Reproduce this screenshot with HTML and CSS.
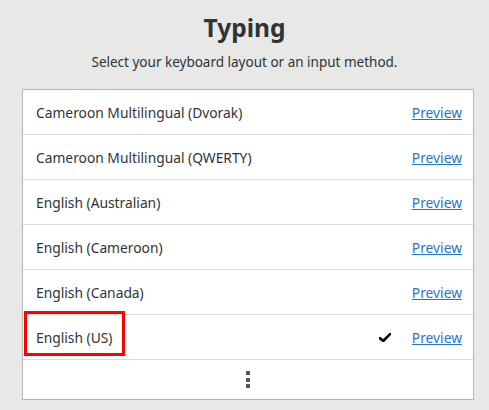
FILE: index.html
```html
<!DOCTYPE html>
<html>
<head>
<meta charset="utf-8">
<link rel="stylesheet" href="styles.css">
</head>
<body>
<div class="page">
  <h1 class="title">Typing</h1>
  <p class="subtitle">Select your keyboard layout or an input method.</p>
  <div class="list">
    <div class="row"><span class="name">Cameroon Multilingual (Dvorak)</span><a class="preview" href="#">Preview</a></div>
    <div class="row"><span class="name">Cameroon Multilingual (QWERTY)</span><a class="preview" href="#">Preview</a></div>
    <div class="row"><span class="name">English (Australian)</span><a class="preview" href="#">Preview</a></div>
    <div class="row"><span class="name">English (Cameroon)</span><a class="preview" href="#">Preview</a></div>
    <div class="row"><span class="name">English (Canada)</span><a class="preview" href="#">Preview</a></div>
    <div class="row selected"><span class="name">English (US)</span><svg class="check" width="12" height="9" viewBox="0 0 12 9"><path d="M1 5.2 L4.2 8 L11 1.2" fill="none" stroke="#000" stroke-width="2.6" stroke-linecap="round" stroke-linejoin="round"/></svg><a class="preview" href="#">Preview</a><span class="highlight"></span></div>
    <div class="more">
      <span class="dots"><i></i><i></i><i></i></span>
    </div>
  </div>
</div>
</body>
</html>
```

FILE: styles.css
```css
html, body {
  margin: 0;
  padding: 0;
  background: #e8e8e7;
}
body {
  font-family: "Noto Sans", "Open Sans", sans-serif;
  color: #2e3436;
}
.page {
  display: flex;
  flex-direction: column;
  align-items: center;
  padding-top: 11px;
}
.title {
  margin: 0;
  font-size: 24.5px;
  font-weight: bold;
  line-height: 34px;
}
.subtitle {
  margin: 7px 0 0 0;
  font-size: 13.5px;
  line-height: 20px;
}
.list {
  align-self: flex-start;
  margin: 17px 0 0 22px;
  width: 450px;
  background: #fff;
  border: 1px solid #b6b6b3;
  display: flex;
  flex-direction: column;
}
.row {
  position: relative;
  height: 44px;
  display: flex;
  align-items: center;
  padding: 0 11px 0 13px;
  border-bottom: 1px solid #dcdcda;
  font-size: 13.8px;
}
.name {
  flex: 1;
}
.check {
  margin-right: 21px;
  margin-top: 1px;
}
.preview {
  color: #2a76c6;
  text-decoration: underline;
}
.highlight {
  position: absolute;
  left: 1px;
  top: -4px;
  width: 95px;
  height: 39px;
  border: 3px solid #f00;
}
.more {
  height: 39px;
  display: flex;
  align-items: center;
  justify-content: center;
}
.dots {
  display: flex;
  flex-direction: column;
  gap: 2.5px;
}
.dots i {
  display: block;
  width: 4px;
  height: 4px;
  background: #555753;
}
```
